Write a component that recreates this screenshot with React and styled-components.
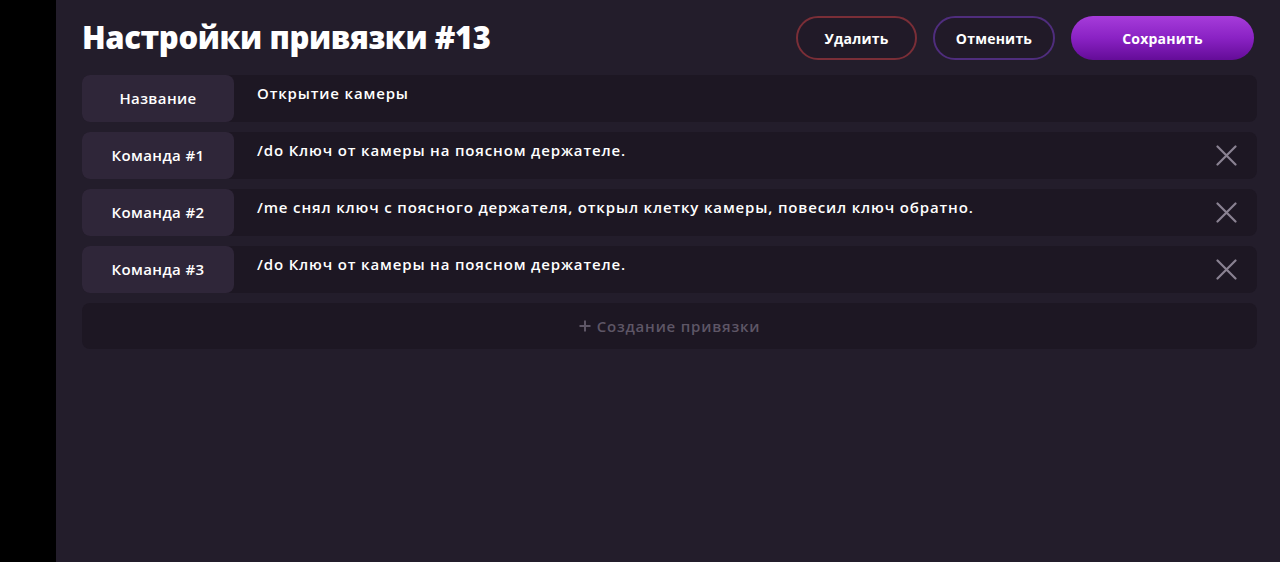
import React, { useState } from 'react';
import styled, { createGlobalStyle } from 'styled-components';

const GlobalStyle = createGlobalStyle`
  html, body {
    margin: 0;
    padding: 0;
    background: #000;
  }
  body {
    font-family: "Open Sans", "Noto Sans", sans-serif;
    color: #fff;
  }
`;

const Screen = styled.div`
  display: flex;
  width: 1280px;
  height: 562px;
  overflow: hidden;
`;

const SideStrip = styled.div`
  width: 56px;
  flex-shrink: 0;
  background: #000;
`;

const Main = styled.main`
  flex: 1;
  background: #231d2b;
  padding: 16px 23px 0 26px;
  box-sizing: border-box;
`;

const Header = styled.header`
  display: flex;
  align-items: center;
  justify-content: space-between;
  height: 44px;
  margin-bottom: 15px;
`;

const Title = styled.h1`
  margin: 0 0 2px;
  font-size: 31px;
  font-weight: 800;
  letter-spacing: -0.4px;
  color: #fff;
`;

const Actions = styled.div`
  display: flex;
  gap: 16px;
  margin-right: 3px;
`;

const Button = styled.button`
  height: 44px;
  width: ${({ $w }) => $w}px;
  border-radius: 22px;
  font-family: inherit;
  font-size: 14px;
  font-weight: 700;
  letter-spacing: 0.2px;
  color: #fff;
  cursor: pointer;
  background: ${({ $variant }) =>
    $variant === 'primary'
      ? 'linear-gradient(180deg, #a63cda 0%, #8a22c4 50%, #640c98 100%)'
      : '#211a28'};
  border: ${({ $variant }) =>
    $variant === 'danger'
      ? '2px solid #7a2e37'
      : $variant === 'ghost'
      ? '2px solid #4f2d7d'
      : 'none'};
`;

const List = styled.div`
  display: flex;
  flex-direction: column;
  gap: 10px;
`;

const Row = styled.div`
  display: flex;
  height: 47px;
  background: #1d1723;
  border-radius: 8px;
`;

const Label = styled.div`
  width: 152px;
  flex-shrink: 0;
  display: flex;
  align-items: center;
  justify-content: center;
  padding-bottom: 2px;
  box-sizing: border-box;
  background: #2f2639;
  border-radius: 8px;
  font-size: 15px;
  font-weight: 600;
  letter-spacing: 0.4px;
  color: #fff;
`;

const Value = styled.div`
  flex: 1;
  padding: 8px 0 0 23px;
  font-size: 15px;
  font-weight: 600;
  letter-spacing: 0.85px;
  color: #fff;
`;

const RemoveButton = styled.button`
  width: 40px;
  margin-right: 11px;
  background: none;
  border: none;
  display: flex;
  align-items: center;
  justify-content: center;
  cursor: pointer;
  padding: 0;
`;

const AddRow = styled.button`
  height: 46px;
  border: none;
  border-radius: 8px;
  background: #1d1723;
  font-family: inherit;
  font-size: 15px;
  font-weight: 600;
  letter-spacing: 0.8px;
  color: #5e5666;
  display: flex;
  align-items: center;
  justify-content: center;
  gap: 6px;
  cursor: pointer;
`;

const CloseIcon = () => (
  <svg width="21" height="21" viewBox="0 0 21 21" fill="none">
    <path d="M1.5 1.5L19.5 19.5M19.5 1.5L1.5 19.5" stroke="#8a8292" strokeWidth="2.2" strokeLinecap="round" />
  </svg>
);

const PlusIcon = () => (
  <svg width="12" height="12" viewBox="0 0 12 12" fill="none">
    <path d="M6 0.5V11.5M0.5 6H11.5" stroke="#5e5666" strokeWidth="2" />
  </svg>
);

const initial = [
  '/do Ключ от камеры на поясном держателе.',
  '/me снял ключ с поясного держателя, открыл клетку камеры, повесил ключ обратно.',
  '/do Ключ от камеры на поясном держателе.',
];

export default function App() {
  const [commands, setCommands] = useState(initial);

  return (
    <>
      <GlobalStyle />
      <Screen>
        <SideStrip />
        <Main>
          <Header>
            <Title>Настройки привязки #13</Title>
            <Actions>
              <Button $variant="danger" $w={121}>Удалить</Button>
              <Button $variant="ghost" $w={122}>Отменить</Button>
              <Button $variant="primary" $w={183}>Сохранить</Button>
            </Actions>
          </Header>
          <List>
            <Row>
              <Label>Название</Label>
              <Value>Открытие камеры</Value>
            </Row>
            {commands.map((cmd, i) => (
              <Row key={i}>
                <Label>Команда #{i + 1}</Label>
                <Value>{cmd}</Value>
                <RemoveButton onClick={() => setCommands(commands.filter((_, j) => j !== i))}>
                  <CloseIcon />
                </RemoveButton>
              </Row>
            ))}
            <AddRow onClick={() => setCommands([...commands, ''])}>
              <PlusIcon />
              Создание привязки
            </AddRow>
          </List>
        </Main>
      </Screen>
    </>
  );
}
